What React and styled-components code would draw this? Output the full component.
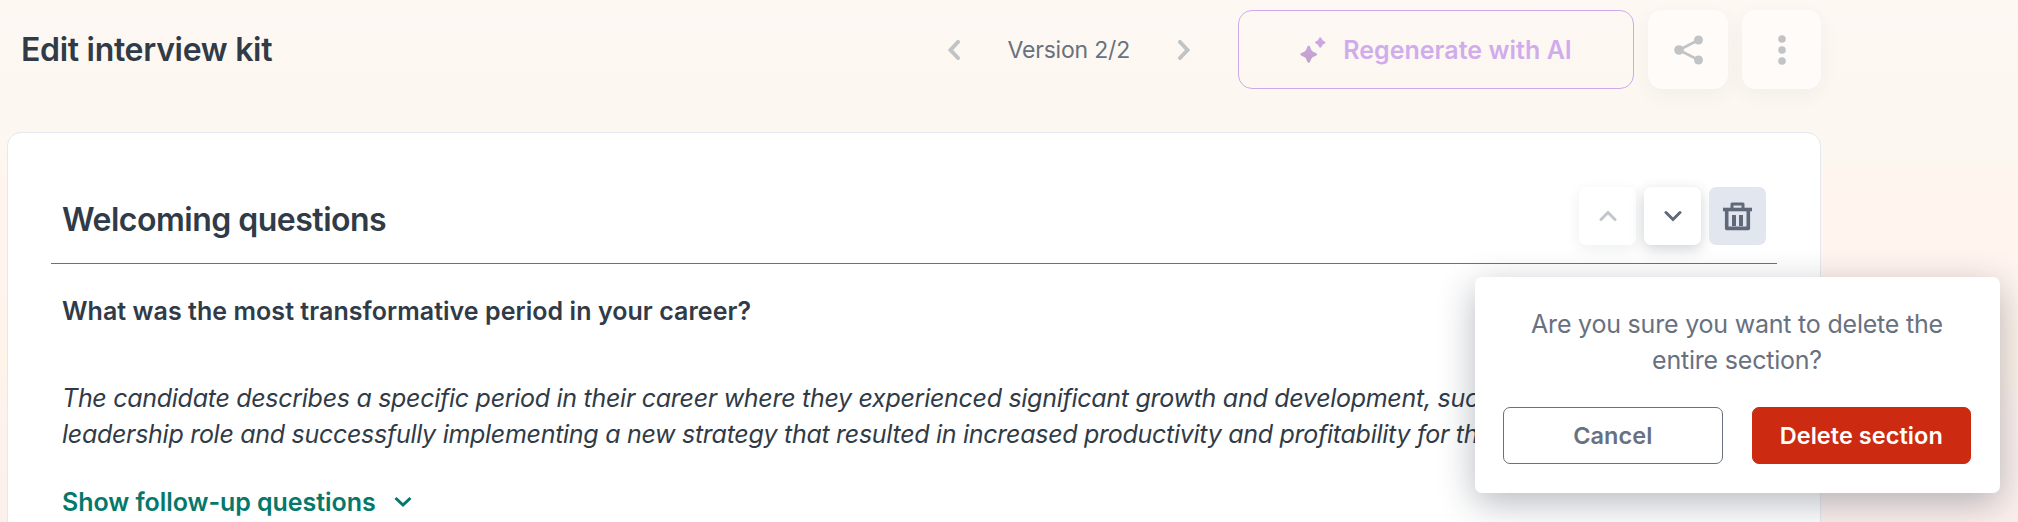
import React from 'react';
import styled, { createGlobalStyle } from 'styled-components';

const GlobalStyle = createGlobalStyle`
    * {
        box-sizing: border-box;
    }

    body {
        margin: 0;
        font-family: 'Inter', sans-serif;
        color: #303b47;
        -webkit-font-smoothing: antialiased;
    }

    button {
        font-family: inherit;
        cursor: pointer;
    }
`;

const Page = styled.div`
    height: 522px;
    overflow: hidden;
    padding: 10px 197px 0 7px;
    background: linear-gradient(
        180deg,
        #fef8f4 0%,
        #fdf7f1 20%,
        #fcf7f0 30%,
        #fff5ef 34%,
        #fff4ee 55%,
        #fff4ea 70%,
        #fdf2ed 78%,
        #fcf0ed 100%
    );
`;

const Header = styled.header`
    display: flex;
    align-items: center;
    height: 79px;
    padding-left: 14px;
`;

const Title = styled.h1`
    flex: 1;
    margin: 0;
    font-size: 32px;
    line-height: 40px;
    font-weight: 600;
    letter-spacing: -0.3px;
`;

const VersionNav = styled.nav`
    display: flex;
    align-items: center;
    gap: 48px;
    margin-right: 48px;
    color: #c2c3c5;
`;

const VersionLabel = styled.span`
    font-size: 23px;
    letter-spacing: -0.2px;
    color: #68717f;
    white-space: nowrap;
`;

const ArrowButton = styled.button`
    display: flex;
    padding: 0;
    border: none;
    background: none;
    color: inherit;
`;

const RegenerateButton = styled.button`
    display: flex;
    align-items: center;
    justify-content: center;
    gap: 17px;
    width: 396px;
    height: 79px;
    margin-right: 14px;
    padding: 0;
    border: 1px solid #cfa9ec;
    border-radius: 14px;
    background: none;
    color: #d0acec;
    font-size: 25px;
    font-weight: 600;
    letter-spacing: 0.03px;
    white-space: nowrap;
`;

const SquareButton = styled.button`
    display: flex;
    align-items: center;
    justify-content: center;
    width: ${(props) => (props.$spaced ? '79px' : '80px')};
    height: 79px;
    margin-left: ${(props) => (props.$spaced ? '14px' : '0')};
    padding: 0;
    border: none;
    border-radius: 14px;
    background: #fffbf8;
    box-shadow: 0 6px 20px rgba(60, 60, 80, 0.05);
    color: #c2c3c5;
`;

const Card = styled.main`
    height: 500px;
    margin-top: 43px;
    padding: 54px 43px 0;
    border: 1px solid #e4e8ef;
    border-radius: 14px;
    background: #fff;
`;

const SectionHeader = styled.div`
    position: relative;
    display: flex;
    align-items: flex-start;
    height: 77px;
    padding: 0 11px;
    border-bottom: 1px solid #68717f;
`;

const SectionTitle = styled.h2`
    flex: 1;
    margin: 13px 0 0;
    font-size: 32px;
    line-height: 40px;
    font-weight: 600;
    letter-spacing: -0.5px;
`;

const Actions = styled.div`
    display: flex;
    gap: 8px;
`;

const ActionButton = styled.button`
    display: flex;
    align-items: center;
    justify-content: center;
    width: 57px;
    height: 58px;
    padding: 0;
    border: none;
    border-radius: 7px;
    background: ${(props) => (props.$active ? '#e2e7ef' : '#fff')};
    box-shadow: ${(props) => (props.$active ? 'none' : '0 4px 14px rgba(40, 50, 70, 0.22)')};
    color: #5f6979;

    &:disabled {
        box-shadow: 0 4px 14px rgba(40, 50, 70, 0.08);
        color: #c3c6cc;
    }
`;

const Question = styled.h3`
    margin: 29px 11px 0;
    font-size: 25px;
    line-height: 36px;
    font-weight: 600;
    letter-spacing: 0.05px;
`;

const Answer = styled.p`
    margin: 51px 11px 0;
    font-size: 25px;
    line-height: 36px;
    font-style: italic;
    letter-spacing: -0.285px;
    white-space: nowrap;
`;

const FollowUpButton = styled.button`
    display: flex;
    align-items: center;
    gap: 18px;
    margin: 32px 11px 0;
    padding: 0;
    border: none;
    background: none;
    color: #04786a;
    font-size: 25px;
    line-height: 36px;
    font-weight: 600;
    letter-spacing: -0.05px;
`;

const Popover = styled.div`
    position: absolute;
    top: 90px;
    right: -223px;
    width: 525px;
    height: 216px;
    padding: 29px 29px 0 28px;
    border-radius: 7px;
    background: #fff;
    box-shadow: 0 10px 36px rgba(30, 40, 60, 0.32);
`;

const PopoverText = styled.p`
    margin: 0;
    color: #68717f;
    font-size: 25px;
    line-height: 36px;
    letter-spacing: -0.21px;
    text-align: center;
    white-space: nowrap;
`;

const PopoverButtons = styled.div`
    display: flex;
    gap: 29px;
    margin-top: 29px;
`;

const PopoverButton = styled.button`
    flex: 1;
    height: 57px;
    padding: 0;
    border: 1px solid ${(props) => (props.$danger ? '#cc2a11' : '#68717f')};
    border-radius: 7px;
    background: ${(props) => (props.$danger ? '#cc2a11' : '#fff')};
    color: ${(props) => (props.$danger ? '#fff' : '#68717f')};
    font-size: 23.5px;
    font-weight: 600;
    letter-spacing: 0.05px;
    white-space: nowrap;
`;

const Chevron = ({ points, width, height, stroke = 4, cap = 'round' }) => (
    <svg width={width} height={height} fill="none" stroke="currentColor" strokeWidth={stroke} strokeLinecap={cap}>
        <polyline points={points} />
    </svg>
);

const SparkleIcon = () => (
    <svg width="26" height="26" viewBox="0 0 26 26">
        <defs>
            <linearGradient id="sparkle" x1="0" y1="0" x2="0" y2="26" gradientUnits="userSpaceOnUse">
                <stop offset="0" stopColor="#cda9e8" />
                <stop offset="1" stopColor="#c0a0c8" />
            </linearGradient>
        </defs>
        <g fill="url(#sparkle)" stroke="url(#sparkle)" strokeWidth="2.8" strokeLinejoin="round">
            <path d="M8.7 10.2 Q9.6 13 10.9 14.8 Q12.6 16.3 15.6 17.3 Q12.6 18.3 10.9 19.8 Q9.6 21.4 8.7 24.2 Q7.8 21.4 6.5 19.8 Q4.8 18.3 1.8 17.3 Q4.8 16.3 6.5 14.8 Q7.8 13 8.7 10.2 Z" />
            <path d="M20.3 1.8 Q21 4.6 24 5.5 Q21 6.4 20.3 9.2 Q19.6 6.4 16.6 5.5 Q19.6 4.6 20.3 1.8 Z" />
        </g>
    </svg>
);

const ShareIcon = () => (
    <svg width="29" height="30" viewBox="0 0 29 30" fill="currentColor">
        <path d="M24.5 5 L5 15 L24.5 25" fill="none" stroke="currentColor" strokeWidth="2.6" />
        <circle cx="5" cy="15" r="4.8" />
        <circle cx="24.5" cy="5" r="4.5" />
        <circle cx="24.5" cy="25" r="4.5" />
    </svg>
);

const DotsIcon = () => (
    <svg width="8" height="30" viewBox="0 0 8 30" fill="currentColor">
        <circle cx="4" cy="4" r="3.8" />
        <circle cx="4" cy="15" r="3.8" />
        <circle cx="4" cy="26" r="3.8" />
    </svg>
);

const TrashIcon = () => (
    <svg width="29" height="29" viewBox="0 0 29 29" fill="none" stroke="currentColor">
        <path d="M0 7.5 H29" strokeWidth="3.6" />
        <path d="M9 7 V2 H20 V7" strokeWidth="3" strokeLinejoin="round" />
        <path d="M3.7 7 V26.4 H25.3 V7" strokeWidth="3.6" strokeLinejoin="round" />
        <path d="M11 13 V24 M18 13 V24" strokeWidth="4" />
    </svg>
);

const App = () => {
    return (
        <>
            <GlobalStyle />
            <Page>
                <Header>
                    <Title>Edit interview kit</Title>
                    <VersionNav>
                        <ArrowButton aria-label="Previous version">
                            <Chevron width={12} height={20} points="10,2 2.5,10 10,18" />
                        </ArrowButton>
                        <VersionLabel>Version 2/2</VersionLabel>
                        <ArrowButton aria-label="Next version">
                            <Chevron width={12} height={20} points="2,2 9.5,10 2,18" />
                        </ArrowButton>
                    </VersionNav>
                    <RegenerateButton>
                        <SparkleIcon />
                        Regenerate with AI
                    </RegenerateButton>
                    <SquareButton aria-label="Share">
                        <ShareIcon />
                    </SquareButton>
                    <SquareButton $spaced aria-label="More">
                        <DotsIcon />
                    </SquareButton>
                </Header>
                <Card>
                    <SectionHeader>
                        <SectionTitle>Welcoming questions</SectionTitle>
                        <Actions>
                            <ActionButton disabled aria-label="Move up">
                                <Chevron width={18} height={12} stroke={3} points="2,9.5 9,2.5 16,9.5" />
                            </ActionButton>
                            <ActionButton aria-label="Move down">
                                <Chevron width={18} height={12} stroke={3} points="2,2.5 9,9.5 16,2.5" />
                            </ActionButton>
                            <ActionButton $active aria-label="Delete">
                                <TrashIcon />
                            </ActionButton>
                        </Actions>
                        <Popover>
                            <PopoverText>
                                Are you sure you want to delete the
                                <br />
                                entire section?
                            </PopoverText>
                            <PopoverButtons>
                                <PopoverButton>Cancel</PopoverButton>
                                <PopoverButton $danger>Delete section</PopoverButton>
                            </PopoverButtons>
                        </Popover>
                    </SectionHeader>
                    <Question>What was the most transformative period in your career?</Question>
                    <Answer>
                        The candidate describes a specific period in their career where they experienced significant growth and development, such
                        <br />
                        leadership role and successfully implementing a new strategy that resulted in increased productivity and profitability for the
                    </Answer>
                    <FollowUpButton>
                        Show follow-up questions
                        <Chevron width={18} height={12} stroke={3} cap="butt" points="1.5,2 9,9 16.5,2" />
                    </FollowUpButton>
                </Card>
            </Page>
        </>
    );
};

export default App;
